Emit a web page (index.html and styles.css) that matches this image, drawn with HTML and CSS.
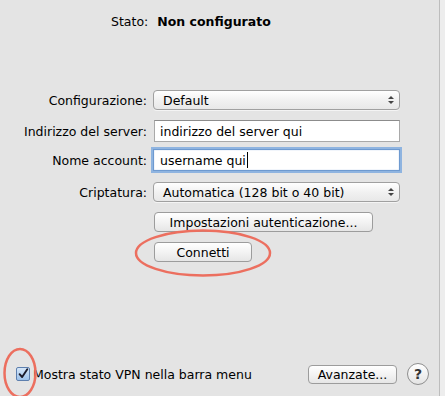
FILE: index.html
```html
<!DOCTYPE html>
<html lang="it">
<head>
    <meta charset="UTF-8">
    <title>VPN</title>
    <link rel="stylesheet" href="styles.css">
</head>
<body>
    <div class="pane">
        <div class="status-row">
            <span class="status-label">Stato:</span>
            <span class="status-value">Non configurato</span>
        </div>

        <div class="form">
            <div class="row row-config">
                <label class="form-label">Configurazione:</label>
                <div class="popup">
                    <span>Default</span>
                    <span class="arrows"><i class="up"></i><i class="down"></i></span>
                </div>
            </div>

            <div class="row row-server">
                <label class="form-label">Indirizzo del server:</label>
                <div class="field">indirizzo del server qui</div>
            </div>

            <div class="row row-account">
                <label class="form-label">Nome account:</label>
                <div class="field focused">username qui<span class="caret"></span></div>
            </div>

            <div class="row row-crypt">
                <label class="form-label">Criptatura:</label>
                <div class="popup">
                    <span>Automatica (128 bit o 40 bit)</span>
                    <span class="arrows"><i class="up"></i><i class="down"></i></span>
                </div>
            </div>

            <div class="row row-auth">
                <span class="form-label"></span>
                <div class="btn auth-btn">Impostazioni autenticazione...</div>
            </div>

            <div class="row row-connect">
                <span class="form-label"></span>
                <div class="btn connect-btn">Connetti</div>
            </div>
        </div>

        <div class="bottom-row">
            <label class="check">
                <span class="checkbox">
                    <svg width="14" height="14" viewBox="0 0 14 14">
                        <path d="M3 7.2 L6 10.5 L12 1.5" fill="none" stroke="#1a1a2a" stroke-width="2.2" stroke-linecap="round" stroke-linejoin="round"/>
                    </svg>
                </span>
                Mostra stato VPN nella barra menu
            </label>
            <div class="btn adv-btn">Avanzate...</div>
            <div class="help">?</div>
        </div>

        <svg class="mark mark-connect" width="140" height="50" viewBox="0 0 140 50">
            <ellipse cx="70" cy="25" rx="67" ry="22.5" fill="none" stroke="#ec6f5f" stroke-width="2.5"/>
        </svg>
        <svg class="mark mark-check" width="36" height="54" viewBox="0 0 36 54">
            <ellipse cx="18" cy="27" rx="15.5" ry="24" fill="none" stroke="#ec6f5f" stroke-width="2.5"/>
        </svg>
    </div>
</body>
</html>
```

FILE: styles.css
```css
* {
    margin: 0;
    padding: 0;
    box-sizing: border-box;
}

html {
    background: #ededed;
}

body {
    font-family: 'DejaVu Sans', 'Liberation Sans', sans-serif;
    font-size: 12.5px;
    color: #000;
    width: 445px;
    height: 396px;
    overflow: hidden;
}

.pane {
    position: relative;
    width: 440px;
    height: 396px;
    background: #e4e4e4;
    border-right: 1px solid #bdbdbd;
    display: flex;
    flex-direction: column;
}

.status-row {
    display: flex;
    align-items: center;
    height: 20px;
    margin-top: 11px;
    padding-left: 111px;
    gap: 9px;
}

.status-value {
    font-weight: bold;
}

.form {
    display: flex;
    flex-direction: column;
    margin-top: 59px;
}

.row {
    display: flex;
    align-items: center;
    gap: 6px;
}

.row-server { margin-top: 10px; }
.row-account { margin-top: 7px; }
.row-crypt { margin-top: 11px; }
.row-auth { margin-top: 10px; }
.row-connect { margin-top: 10px; }

.form-label {
    width: 147px;
    flex: none;
    text-align: right;
    white-space: nowrap;
}

.popup {
    width: 247px;
    height: 20px;
    border: 1px solid #a0a0a0;
    border-radius: 4px;
    background: linear-gradient(#ffffff, #f1f1f1 50%, #e8e8e8);
    box-shadow: 0 1px 0 rgba(255, 255, 255, 0.6);
    display: flex;
    align-items: center;
    justify-content: space-between;
    padding: 0 5px 0 9px;
}

.arrows {
    display: flex;
    flex-direction: column;
    gap: 2px;
}

.arrows i {
    width: 0;
    height: 0;
    border-left: 3px solid transparent;
    border-right: 3px solid transparent;
}

.arrows .up {
    border-bottom: 3px solid #444;
}

.arrows .down {
    border-top: 3px solid #444;
}

.field {
    width: 246px;
    height: 22px;
    margin-left: 1px;
    background: #fff;
    border: 1px solid #a9a9a9;
    border-top-color: #8c8c8c;
    padding: 0 0 0 5px;
    display: flex;
    align-items: center;
    white-space: nowrap;
}

.field.focused {
    width: 247px;
    margin-left: 0;
    border: 1px solid #6e9ad0;
    box-shadow: 0 0 0 2px #8fb4e0, inset 0 0 1px #6e9ad0;
    padding-left: 6px;
}

.caret {
    display: inline-block;
    width: 1px;
    height: 16px;
    background: #000;
    margin-left: 1px;
}

.btn {
    height: 20px;
    border: 1px solid #9c9c9c;
    border-radius: 4px;
    background: linear-gradient(#ffffff, #f3f3f3 50%, #e6e6e6);
    display: flex;
    align-items: center;
    justify-content: center;
    white-space: nowrap;
}

.auth-btn {
    width: 219px;
    margin-left: 1px;
}

.connect-btn {
    width: 98px;
    margin-left: 1px;
}

.bottom-row {
    margin-top: auto;
    margin-bottom: 11px;
    display: flex;
    align-items: center;
    padding: 0 10px 0 16px;
    height: 22px;
}

.check {
    display: flex;
    align-items: center;
    gap: 3px;
}

.checkbox {
    width: 14px;
    height: 14px;
    border: 1px solid #5d7fae;
    border-radius: 2px;
    background: linear-gradient(#d5e6f8, #9cc1ea);
    display: flex;
    align-items: center;
    justify-content: center;
}

.adv-btn {
    width: 89px;
    height: 19px;
    margin-left: auto;
}

.help {
    width: 22px;
    height: 22px;
    margin-left: 10px;
    border: 1px solid #8e8e8e;
    border-radius: 50%;
    background: linear-gradient(#ffffff, #e4e4e4);
    display: flex;
    align-items: center;
    justify-content: center;
    font-size: 14px;
    font-weight: bold;
    color: #333;
}

.mark {
    position: absolute;
}

.mark-connect {
    left: 133px;
    top: 228px;
}

.mark-check {
    left: 2px;
    top: 346px;
}
```
